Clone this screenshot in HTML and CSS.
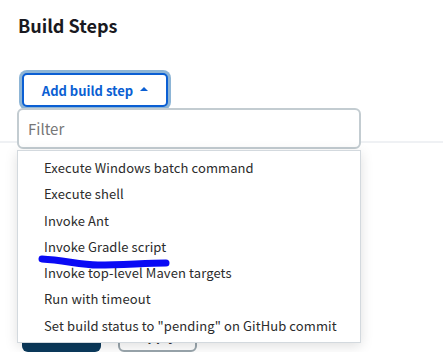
FILE: index.html
```html
<!DOCTYPE html>
<html lang="en">
<head>
  <meta charset="UTF-8">
  <link rel="stylesheet" href="styles.css">
</head>
<body>
  <div class="section">
    <h2 class="section-title">Build Steps</h2>
    <div class="step-area">
      <button class="add-step">Add build step <span class="caret"></span></button>

      <div class="dropdown">
        <input class="filter" type="text" placeholder="Filter">
        <ul class="step-list">
          <li>Execute Windows batch command</li>
          <li>Execute shell</li>
          <li>Invoke Ant</li>
          <li>Invoke Gradle script</li>
          <li>Invoke top-level Maven targets</li>
          <li>Run with timeout</li>
          <li>Set build status to "pending" on GitHub commit</li>
        </ul>
        <svg class="scribble" width="140" height="22" viewBox="0 0 140 22">
          <path d="M6 8 C 28 9, 44 14, 62 14 C 86 14, 110 12, 130 12" fill="none" stroke="#0a0af5" stroke-width="7" stroke-linecap="round"/>
        </svg>
      </div>
    </div>
  </div>
  <div class="divider"></div>
  <div class="bottom-bar">
    <button class="btn btn-save">Save</button>
    <button class="btn btn-apply">Apply</button>
  </div>
</body>
</html>
```

FILE: styles.css
```css
body {
  margin: 0;
  background: #fff;
  font-family: "Noto Sans CJK KR", "Noto Sans", sans-serif;
  color: #1b1b22;
  overflow: hidden;
}

.section {
  padding: 0 18px;
}

.section-title {
  margin: 0;
  padding-top: 12px;
  font-size: 18px;
  line-height: 26px;
  font-weight: 700;
  color: #191921;
}

.step-area {
  position: relative;
  padding-top: 35px;
  padding-left: 4px;
}

.add-step {
  display: flex;
  align-items: center;
  justify-content: center;
  gap: 7px;
  width: 146px;
  height: 34px;
  background: #fff;
  border: 2px solid #0b5fd3;
  border-radius: 5px;
  box-shadow: 0 0 0 3px #8db5d6;
  color: #0b5fd3;
  font-family: inherit;
  font-size: 13px;
  font-weight: 600;
  padding: 0;
}

.caret {
  width: 0;
  height: 0;
  border-left: 4px solid transparent;
  border-right: 4px solid transparent;
  border-bottom: 4px solid #0b5fd3;
  margin-top: -2px;
}

.dropdown {
  position: absolute;
  left: -1px;
  top: 70px;
  width: 344px;
  z-index: 5;
}

.filter {
  display: block;
  box-sizing: border-box;
  width: 344px;
  height: 41px;
  border: 2px solid #c3ccd1;
  border-radius: 6px;
  padding: 0 9px;
  font-family: inherit;
  font-size: 15px;
  color: #333;
  outline: none;
}

.filter::placeholder {
  color: #777;
}

.step-list {
  list-style: none;
  margin: 1px 0 0;
  padding: 4px 0 3px 26px;
  background: #fff;
  border: 1px solid #d3d9de;
  box-shadow: 0 3px 12px rgba(0, 0, 0, 0.13);
  font-size: 13px;
  letter-spacing: 0.1px;
  color: #2b2b2b;
}

.step-list li {
  height: 26.3px;
  line-height: 26px;
}

.scribble {
  position: absolute;
  left: 19px;
  top: 143px;
}

.divider {
  height: 2px;
  background: #eff1f4;
  position: absolute;
  left: 0;
  right: 0;
  top: 141px;
  z-index: 1;
}

.bottom-bar {
  display: flex;
  gap: 17px;
  padding-left: 22px;
  margin-top: 212px;
}

.btn {
  width: 79px;
  height: 33px;
  border-radius: 6px;
  font-family: inherit;
  font-size: 13px;
  font-weight: 600;
}

.btn-save {
  background: #0b3a5c;
  border: none;
  color: #fff;
}

.btn-apply {
  background: #fff;
  border: 2px solid #9aa6ad;
  color: #333;
}
```
